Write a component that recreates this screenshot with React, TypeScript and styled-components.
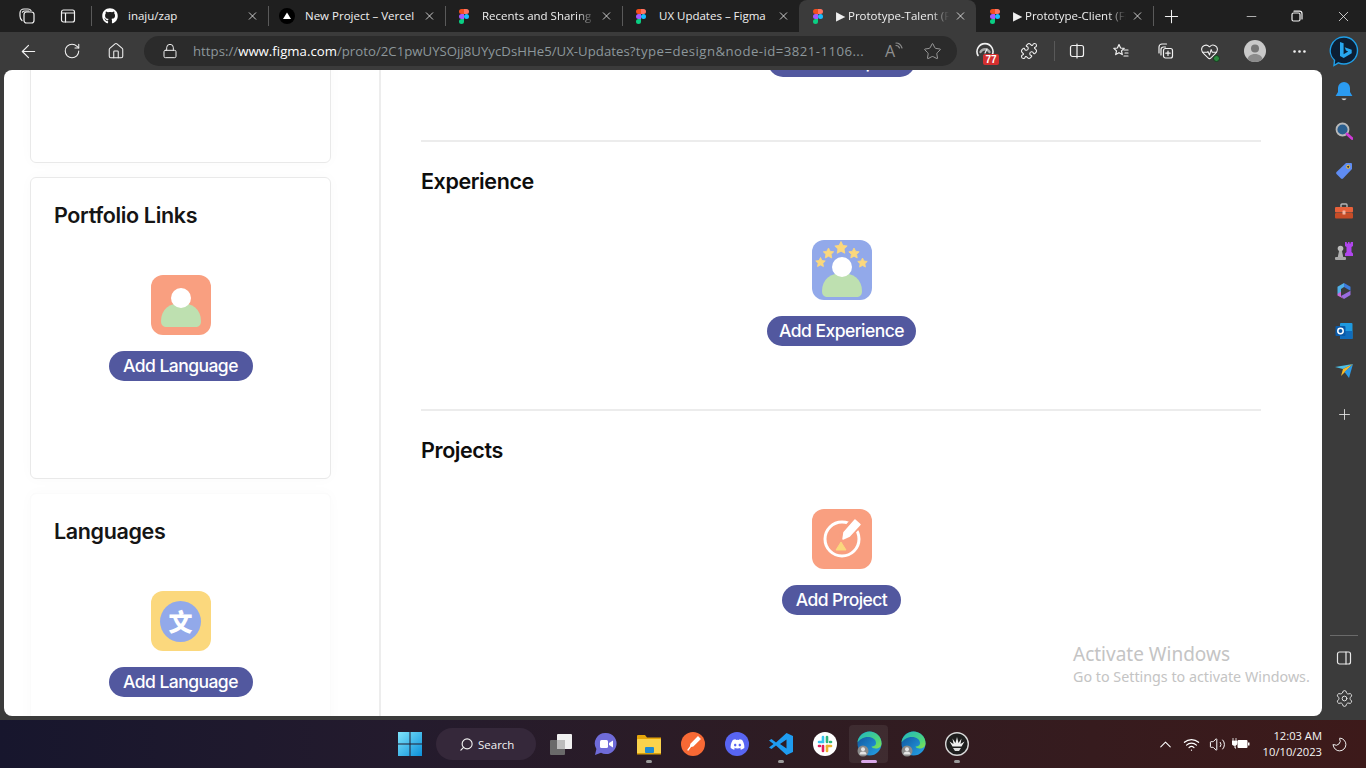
import React from "react";
import styled, { createGlobalStyle } from "styled-components";
import { FaGithub, FaDiscord } from "react-icons/fa";
import { ArrowLeft, RotateCw, Home, Lock, Star as StarLine, Puzzle, HeartPulse, MoreHorizontal, Plus, X, Minus, Search, ChevronUp, Wifi, Volume2, Moon, Settings } from "lucide-react";

const Global = createGlobalStyle`
  html, body { margin: 0; padding: 0; width: 1366px; height: 768px; overflow: hidden; background: #3b3b3b; }
  * { box-sizing: border-box; }
  svg { display: block; }
`;
const UI = `"Open Sans", "Noto Sans", "Liberation Sans", sans-serif`;

const Page = styled.div`width:1366px;height:768px;display:flex;flex-direction:column;overflow:hidden;background:#3b3b3b;font-family:${UI};`;
const TabBar = styled.div`height:32px;background:#1f1f1f;display:flex;align-items:stretch;color:#f2f2f2;flex:none;`;
const TabLead = styled.div`width:91px;padding-left:7px;display:flex;flex:none;`;
const Slot = styled.div<{ $w?: number }>`width:${p => p.$w ?? 44}px;flex:none;display:flex;align-items:center;justify-content:center;position:relative;color:#f2f2f2;`;
const Sep = styled.div<{ $off?: boolean }>`width:1px;height:20px;align-self:center;flex:none;background:${p => (p.$off ? "transparent" : "#5a5a5a")};`;
const Tab = styled.div<{ $active?: boolean }>`
  width:${p => (p.$active ? 177 : 176)}px;margin-left:${p => (p.$active ? -1 : 0)}px;flex:none;display:flex;align-items:center;
  padding:0 9px 0 ${p => (p.$active ? 11 : 10)}px;
  background:${p => (p.$active ? "#3b3b3b" : "transparent")};border-radius:8px 8px 0 0;
`;
const TabIcon = styled.div`width:16px;height:16px;flex:none;display:flex;align-items:center;justify-content:center;`;
const TabTitle = styled.div<{ $fade?: boolean }>`
  margin-left:10px;width:113px;flex:none;font-size:11.5px;line-height:16px;white-space:nowrap;overflow:hidden;color:#f0f0f0;
  ${p => (p.$fade ? "-webkit-mask-image:linear-gradient(90deg,#000 84%,transparent 100%);mask-image:linear-gradient(90deg,#000 84%,transparent 100%);" : "")}
`;
const TabClose = styled.div`margin-left:auto;width:13px;display:flex;justify-content:center;color:#f0f0f0;`;
const WindowControls = styled.div`margin-left:auto;display:flex;`;

const Toolbar = styled.div`height:38px;background:#3b3b3b;display:flex;align-items:center;padding-left:6px;flex:none;`;
const Address = styled.div`margin:0 6px;width:813px;height:30px;flex:none;border-radius:15px;background:#2b2b2b;display:flex;align-items:center;padding-left:18px;color:#eeeeee;`;
const Url = styled.div`margin-left:15px;width:673px;font-size:13.2px;white-space:nowrap;overflow:hidden;color:#8d979b;letter-spacing:.02px;`;
const Host = styled.span`color:#fff;`;
const Query = styled.span`letter-spacing:.45px;`;
const ReadAloud = styled.div`margin-left:19px;display:flex;align-items:flex-start;color:#8f8f8f;font-size:16px;line-height:18px;width:20px;`;
const AddrStar = styled.div`margin-left:18px;color:#a8a8a8;`;
const ToolSep = styled.div`width:1px;height:20px;background:#595959;margin:0 0 0 3px;flex:none;`;
const Badge = styled.div`position:absolute;left:20px;top:13px;width:16px;height:11px;border-radius:2px;background:#d32f2f;color:#fff;font:700 10px/11px "Liberation Sans",sans-serif;text-align:center;`;
const OkDot = styled.div`position:absolute;left:26px;top:13px;width:7px;height:7px;border-radius:50%;background:#2a8a3e;border:1px solid #173c20;`;
const Avatar = styled.div`width:22px;height:22px;border-radius:50%;background:#c9c9c9;overflow:hidden;`;

const Main = styled.div`flex:1;min-height:0;display:flex;padding-left:4px;`;
const Content = styled.div`width:1318px;height:646px;background:#fff;border-radius:8px;overflow:hidden;display:flex;position:relative;flex:none;`;
const Side = styled.div`width:377px;flex:none;border-right:2px solid #ededed;padding-left:26px;overflow:hidden;`;
const SideScroll = styled.div`margin-top:-209px;display:flex;flex-direction:column;gap:14px;`;
const Card = styled.section<{ $plain?: boolean }>`
  width:301px;height:302px;flex:none;border-radius:6px;padding:24px 23px 0;background:#fff;
  border:1px solid ${p => (p.$plain ? "#fbfbfb" : "#e9e9e9")};box-shadow:0 0 14px rgba(0,0,0,.025);
`;
const Empty = styled.div`height:100%;`;
const CardTitle = styled.h2`margin:0 0 47px;font:600 21.5px/26px Inter,sans-serif;color:#151515;letter-spacing:-.35px;`;
const Add = styled.div`display:flex;flex-direction:column;align-items:center;gap:16px;`;
const BodyAdd = styled(Add)`margin-left:1px;`;
const Pill = styled.div<{ $w: number }>`width:${p => p.$w}px;height:30px;border-radius:15px;background:#52589f;color:#fff;text-align:center;font:500 17.5px/30px Inter,sans-serif;letter-spacing:-.55px;white-space:nowrap;`;
const LangTile = styled.div`width:60px;height:60px;border-radius:12px;background:#fbd87d;display:flex;align-items:center;justify-content:center;`;
const LangCircle = styled.div`width:41px;height:41px;border-radius:50%;background:#92a9ea;color:#fff;display:flex;align-items:center;justify-content:center;font:900 24px/1 "Noto Sans CJK SC",sans-serif;`;

const Body = styled.div`flex:1;padding:0 61px 0 40px;overflow:hidden;`;
const TopAdd = styled.div`margin-top:-23px;padding-bottom:63px;`;
const Sec = styled.section`border-top:2px solid #ececec;height:269px;padding-top:26px;`;
const SecTitle = styled.h2`margin:0 0 46px;font:600 21.5px/26px Inter,sans-serif;color:#0d0d0d;letter-spacing:-.4px;`;

const Watermark = styled.div`position:absolute;left:1069px;top:571px;color:#c4c4c4;font-family:"Noto Sans",sans-serif;`;
const WmTitle = styled.div`font-size:19px;line-height:26px;`;
const WmSub = styled.div`font-size:14.3px;line-height:20px;`;

const Rail = styled.aside`width:44px;flex:none;display:flex;flex-direction:column;align-items:center;padding:1px 0 2px;height:650px;`;
const RailSlot = styled.div<{ $gap?: number }>`width:44px;height:40px;flex:none;display:flex;align-items:center;justify-content:center;position:relative;color:#e8e8e8;margin-top:${p => p.$gap ?? 0}px;`;
const RailSep = styled.div`width:28px;height:1px;background:#6a6a6a;margin-top:auto;margin-bottom:2px;`;

const Taskbar = styled.footer`height:48px;flex:none;display:flex;align-items:center;padding-left:388px;padding-right:18px;background:linear-gradient(90deg,#17162d 0%,#241b2d 30%,#2f1c22 60%,#3d1a1a 100%);color:#fff;`;
const Searchbox = styled.div`margin:0 3px 0 4px;width:100px;height:32px;border-radius:16px;background:#35283a;display:flex;align-items:center;padding-left:23px;gap:4px;font-size:11.5px;color:#f2f2f2;flex:none;`;
const Mirror = styled.div`transform:scaleX(-1);`;
const TaskSlot = styled.div<{ $active?: boolean }>`
  width:44px;height:48px;flex:none;display:flex;align-items:center;justify-content:center;position:relative;
  ${p => (p.$active ? `&::before{content:"";position:absolute;left:2px;right:3px;top:5px;bottom:5px;border-radius:4px;background:rgba(255,255,255,.07);}` : "")}
  & > svg { position:relative; }
`;
const Dot = styled.div<{ $active?: boolean }>`position:absolute;bottom:5px;left:50%;transform:translateX(-50%);height:3px;border-radius:2px;width:${p => (p.$active ? 16 : 6)}px;background:${p => (p.$active ? "#d9a8e8" : "#9a9a9a")};`;
const DiscordTile = styled.div`width:24px;height:24px;border-radius:50%;background:#5865f2;display:flex;align-items:center;justify-content:center;color:#fff;`;
const Tray = styled.div`margin-left:auto;display:flex;align-items:center;`;
const Clock = styled.div`width:69px;text-align:right;font-size:11.2px;line-height:16px;color:#f5f5f5;white-space:nowrap;`;
const MoonSlot = styled.div`margin-left:8px;width:18px;display:flex;justify-content:center;color:#f0f0f0;`;

const Figma = () => (
  <svg width="10" height="15" viewBox="0 0 38 57">
    <path d="M19 28.5a9.5 9.5 0 1 1 19 0 9.5 9.5 0 0 1-19 0z" fill="#1ABCFE" />
    <path d="M0 47.5A9.5 9.5 0 0 1 9.5 38H19v9.5a9.5 9.5 0 1 1-19 0z" fill="#0ACF83" />
    <path d="M19 0v19h9.5a9.5 9.5 0 1 0 0-19H19z" fill="#FF7262" />
    <path d="M0 9.5A9.5 9.5 0 0 0 9.5 19H19V0H9.5A9.5 9.5 0 0 0 0 9.5z" fill="#F24E1E" />
    <path d="M0 28.5A9.5 9.5 0 0 0 9.5 38H19V19H9.5A9.5 9.5 0 0 0 0 28.5z" fill="#A259FF" />
  </svg>
);
const Vercel = () => (
  <svg width="16" height="16" viewBox="0 0 16 16"><circle cx="8" cy="8" r="8" fill="#000" /><path d="M8 4.5 12 11H4z" fill="#fff" /></svg>
);
const Line = ({ s = 16, v = 16, children }: { s?: number; v?: number; children: React.ReactNode }) => (
  <svg width={s} height={s} viewBox={`0 0 ${v} ${v}`} fill="none" stroke="currentColor" strokeWidth="1.2" strokeLinecap="round" strokeLinejoin="round">{children}</svg>
);
const Workspaces = () => (
  <Line s={18} v={18}><rect x="6" y="5" width="10" height="11" rx="2.5" /><path d="M4 13.5C2.8 12.5 2 11 2 9V6a4 4 0 0 1 4-4h4c1.3 0 2.4.5 3 1.5" /><path d="M4.4 5.2A3 3 0 0 1 7 4h4" /></Line>
);
const VTabs = () => (
  <Line s={16}><rect x="1.5" y="2" width="13" height="12" rx="2" /><path d="M1.5 5h13M5.5 5v9" /></Line>
);
const Split = () => (
  <Line s={16}><rect x="1.5" y="2.5" width="13" height="11" rx="2" /><path d="M8 1v14" /></Line>
);
const Favs = () => (
  <Line s={18} v={18}><path d="M7 2.5 8.6 6l3.6.4-2.7 2.5.8 3.7L7 10.7l-3.3 1.9.8-3.7-2.7-2.5L5.4 6z" /><path d="M12 8h4M13 11h3M12 14h4" /></Line>
);
const Collections = () => (
  <Line s={18} v={18}><path d="M3 11V5a3 3 0 0 1 3-3h4.5" /><path d="M5 13V7.5A2.5 2.5 0 0 1 7.5 5h2" /><rect x="7.5" y="6.5" width="9" height="9.5" rx="2" /><path d="M12 9v4.5M9.8 11.2h4.4" /></Line>
);
const Bing = () => (
  <svg width="30" height="32" viewBox="0 0 30 32">
    <path d="M15 2a13.5 13.5 0 0 1 0 27c-2 0-4-.4-5.6-1.2L5 30.5l.5-5.2A13.5 13.5 0 0 1 15 2z" fill="#0c1e33" stroke="#1f9fe8" strokeWidth="1.4" />
    <path d="M11 7l3.6 1.3v11l4.6-2.7-2.2-1-1.3-3.4 7 2.5v3.6l-8 4.7-3.7-2z" fill="#27a7f0" />
  </svg>
);
const Gauge = () => (
  <Line s={20} v={20}><path d="M3 14.5a8 8 0 1 1 14 0" strokeWidth="1.6" /><path d="M5.5 11a5 5 0 0 1 9 0" stroke="#aaa" strokeWidth="2.4" /><path d="M10 12l2-4" /></Line>
);
const Bell = () => (
  <svg width="18" height="20" viewBox="0 0 18 20"><path d="M9 1a6 6 0 0 1 6 6v4l2.4 4H.6L3 11V7a6 6 0 0 1 6-6z" fill="#2b9bf0" /><path d="M6.5 17.5h5c-.6 1.2-1.5 1.7-2.5 1.7s-1.9-.5-2.5-1.7z" fill="#cfcfcf" /></svg>
);
const SearchColor = () => (
  <svg width="18" height="18" viewBox="0 0 18 18"><circle cx="7.5" cy="7.5" r="6" fill="#2b5f8f" stroke="#b9b9b9" strokeWidth="1.8" /><path d="M12 12l5 4.5" stroke="#cf3ad6" strokeWidth="2.8" strokeLinecap="round" /></svg>
);
const TagIcon = () => (
  <svg width="18" height="18" viewBox="0 0 18 18"><path d="M11 1h5a1 1 0 0 1 1 1v5L8 16.5a1.5 1.5 0 0 1-2 0L1.5 12a1.5 1.5 0 0 1 0-2z" fill="#5f8cf2" /><circle cx="13.2" cy="4.8" r="1.6" fill="#3b3b3b" stroke="#f3c33f" strokeWidth="1" /></svg>
);
const Toolbox = () => (
  <svg width="18" height="16" viewBox="0 0 18 16"><path d="M6 4V2a1 1 0 0 1 1-1h4a1 1 0 0 1 1 1v2" fill="none" stroke="#b5b5b5" strokeWidth="1.4" /><rect y="4" width="18" height="5.5" rx="1" fill="#e8613a" /><rect y="10" width="18" height="5.5" rx="1" fill="#c74c27" /><rect x="7.5" y="7.5" width="3" height="4" rx=".6" fill="#f2b3a0" /></svg>
);
const Chess = () => (
  <svg width="20" height="20" viewBox="0 0 20 20">
    <circle cx="6.5" cy="7.5" r="2.8" fill="#bdbdbd" /><path d="M5 10h3l1.2 6H3.8z" fill="#b0b0b0" /><rect x="1" y="16" width="11" height="3" rx="1" fill="#a8a8a8" />
    <path d="M11 1h1.8v1.500H14V1h1.500v1.500h1.200V1H19v4l-1.500 1v5l1.500 1.500V15h-8v-2.500L12.500 11V6L11 5z" fill="#b145ee" />
  </svg>
);
const Copilot = () => (
  <svg width="18" height="18" viewBox="0 0 18 18"><path d="M9 1l6.5 3.7v4L9 5z" fill="#3d7bdc" /><path d="M2.5 4.7 9 1v4L6 7v7l-3.5-2z" fill="#4fb0e8" /><path d="M6 14l9.5-5.3V13L9 17z" fill="#9a6de0" /><path d="M2.5 12 6 9.5V14l3 3-6.5-3.5z" fill="#c86ad8" /></svg>
);
const Outlook = () => (
  <svg width="18" height="18" viewBox="0 0 18 18"><rect x="5" y="1" width="12.5" height="16" rx="1" fill="#1e9ae0" /><path d="M5 9h12.5v8H6a1 1 0 0 1-1-1z" fill="#0f6cbd" /><rect x=".5" y="4" width="10" height="10" rx="1" fill="#0a5aa8" /><circle cx="5.5" cy="9" r="2.7" fill="none" stroke="#fff" strokeWidth="1.5" /></svg>
);
const Send = () => (
  <svg width="18" height="14" viewBox="0 0 18 14"><path d="M0 3 18 0 8 5z" fill="#4cc0e8" /><path d="M8 5 18 0 6 12z" fill="#f7b928" /><path d="M18 0 14 14 9.5 8z" fill="#2b9be8" /></svg>
);
const PanelIcon = () => (
  <Line s={16}><rect x="1.5" y="2" width="13" height="12" rx="2" /><path d="M10 2v12" /></Line>
);
const WinLogo = () => (
  <svg width="24" height="24" viewBox="0 0 24 24">
    <defs><linearGradient id="w" x1="0" y1="0" x2="1" y2="1"><stop offset="0" stopColor="#7fe4fb" /><stop offset="1" stopColor="#0b8fd9" /></linearGradient></defs>
    <path d="M0 0h11.5v11.5H0zM12.5 0H24v11.5H12.5zM0 12.5h11.5V24H0zM12.5 12.5H24V24H12.5z" fill="url(#w)" />
  </svg>
);
const TaskView = () => (
  <svg width="24" height="24" viewBox="0 0 24 24"><rect x="1" y="8" width="15" height="15" rx="1" fill="#6a6a6a" /><rect x="8" y="2" width="15" height="15" rx="1" fill="#f0f0f0" /><rect x="8" y="8" width="8" height="9" fill="#bcbcbc" /></svg>
);
const Meet = () => (
  <svg width="24" height="24" viewBox="0 0 24 24"><path d="M13 1a10.5 10.5 0 1 1-5 19.7L2 23l1.4-6A10.5 10.5 0 0 1 13 1z" fill="#6f6bd8" /><rect x="7" y="8" width="8" height="8" rx="1.5" fill="#fff" /><path d="M16 11l4-2.5v7L16 13z" fill="#fff" /></svg>
);
const Explorer = () => (
  <svg width="24" height="24" viewBox="0 0 24 24"><path d="M0 4a1 1 0 0 1 1-1h7l2 2.5h14V8H0z" fill="#e5a50a" /><rect y="7" width="24" height="15" rx="1" fill="#fbd34c" /><rect x="8" y="15" width="9" height="6" rx="1" fill="#1f8ad2" /><rect y="21" width="24" height="1.5" fill="#d9a00a" /></svg>
);
const Postman = () => (
  <svg width="24" height="24" viewBox="0 0 24 24"><circle cx="12" cy="12" r="12" fill="#f76935" /><path d="M17 5l2 2-7 7-2.5.5.5-2.5zM10 14l-3 4" stroke="#fff" strokeWidth="1.3" fill="#fff" strokeLinecap="round" /></svg>
);
const VSCode = () => (
  <svg width="24" height="24" viewBox="0 0 24 24"><path d="M17.5 1 24 4v16l-6.5 3L7 13.5 2.5 17 0 15.5 4.5 12 0 8.5 2.5 7 7 10.5zM17.5 7.5 11 12l6.5 4.5z" fill="#1f9cf0" /></svg>
);
const Slack = () => (
  <svg width="24" height="24" viewBox="0 0 24 24"><circle cx="12" cy="12" r="12" fill="#fff" />
    <g strokeWidth="2.6" strokeLinecap="round" fill="none"><path d="M10 5v5H6" stroke="#36c5f0" /><path d="M14 5v5" stroke="#2eb67d" /><path d="M18 10h-1" stroke="#2eb67d" /><path d="M14 19v-5" stroke="#ecb22e" /><path d="M18 14h-4" stroke="#ecb22e" /><path d="M10 14v5" stroke="#e01e5a" /><path d="M6 14h1" stroke="#e01e5a" /></g>
  </svg>
);
const Edge = () => (
  <svg width="25" height="26" viewBox="0 0 25 26">
    <defs>
      <linearGradient id="eg" x1="0" y1="0" x2="1" y2="1"><stop offset="0" stopColor="#1fb5c4" /><stop offset=".7" stopColor="#4fd67a" /><stop offset="1" stopColor="#8ee04a" /></linearGradient>
      <linearGradient id="eb" x1="0" y1="0" x2="1" y2="1"><stop offset="0" stopColor="#0f4f98" /><stop offset="1" stopColor="#26a6ea" /></linearGradient>
    </defs>
    <circle cx="12.5" cy="12.5" r="12" fill="url(#eb)" />
    <path d="M12.5.5a12 12 0 0 1 12 12c0 3-2.5 5-6 5-2 0-3.8-.8-4-2 3 0 4.5-1.5 4.5-3.500 0-3.500-3.500-6-8-6-5 0-8.500 2.500-10.500 5.500C1 5.500 6 .5 12.500.5z" fill="url(#eg)" />
    <circle cx="6" cy="20" r="5.5" fill="#8a8a8a" /><circle cx="6" cy="18.3" r="2" fill="#e4e4e4" /><path d="M2.5 23.5a3.5 3 0 0 1 7 0z" fill="#e4e4e4" />
  </svg>
);
const Peacock = () => (
  <svg width="24" height="24" viewBox="0 0 24 24"><circle cx="12" cy="12" r="11.3" fill="#1e1e1e" stroke="#d8d8d8" strokeWidth="1.4" /><path d="M12 5l1.5 6 3-4.5-1 5.5 4-2.5-3 5H7.5l-3-5 4 2.5-1-5.5 3 4.500z" fill="#f0f0f0" /><path d="M8 16h8l-2 3h-4z" fill="#e0e0e0" /></svg>
);
const Battery = () => (
  <svg width="18" height="14" viewBox="0 0 18 14"><path d="M1 1v3M4 1v3M0 4h5v2a2.5 2.5 0 0 1-5 0z" fill="#fff" stroke="#fff" strokeWidth=".8" /><path d="M3 8v3h1" stroke="#fff" fill="none" /><rect x="5.5" y="3" width="10" height="8" rx="1" fill="#fff" /><rect x="16" y="5.5" width="1.5" height="3" fill="#fff" /></svg>
);

const Tile = ({ fill, children }: { fill: string; children: React.ReactNode }) => (
  <svg width="60" height="60" viewBox="0 0 60 60"><rect width="60" height="60" rx="12" fill={fill} />{children}</svg>
);
const Body1 = ({ top }: { top: number }) => (
  <path d={`M10 ${top + 18}C10 ${top + 6} 19 ${top} 30 ${top}C41 ${top} 50 ${top + 6} 50 ${top + 18}C50 ${top + 22} 48 ${top + 24} 44 ${top + 24}H16C12 ${top + 24} 10 ${top + 22} 10 ${top + 18}Z`} fill="#bee0b0" />
);
const StarShape = ({ x, y, r = 5.5 }: { x: number; y: number; r?: number }) => {
  const pts = Array.from({ length: 10 }, (_, i) => {
    const a = -Math.PI / 2 + (i * Math.PI) / 5;
    const d = i % 2 ? r * 0.5 : r;
    return `${(x + d * Math.cos(a)).toFixed(2)},${(y + d * Math.sin(a)).toFixed(2)}`;
  }).join(" ");
  return <polygon points={pts} fill="#fbd87d" stroke="#fbd87d" strokeWidth=".8" strokeLinejoin="round" />;
};
const PersonTile = () => (
  <Tile fill="#f99f80"><Body1 top={28} /><circle cx="30" cy="23" r="10" fill="#fff" /></Tile>
);
const ExperienceTile = () => (
  <Tile fill="#92a9ea">
    <StarShape x={29} y={8} r={6.5} /><StarShape x={16.5} y={13.5} /><StarShape x={42} y={13.5} /><StarShape x={8.5} y={22.5} r={5} /><StarShape x={50.5} y={23} r={5} />
    <Body1 top={33} /><circle cx="30" cy="27" r="10" fill="#fff" />
  </Tile>
);
const ProjectTile = () => (
  <Tile fill="#f99f80">
    <circle cx="30" cy="30" r="17" fill="none" stroke="#fff" strokeWidth="3" />
    <path d="M34 25 44 14" stroke="#f99f80" strokeWidth="13" strokeLinecap="round" />
    <path d="M43 11 48 15.5 37.5 27 31 30 32 23.5z" fill="#fff" stroke="#fff" strokeWidth="1.5" strokeLinejoin="round" />
    <path d="M29 33l5 8h-10z" fill="#fbd87d" stroke="#fbd87d" strokeWidth="1" strokeLinejoin="round" />
  </Tile>
);

const tabs = [
  { icon: <FaGithub size={16} color="#fff" />, title: "inaju/zap" },
  { icon: <Vercel />, title: "New Project – Vercel" },
  { icon: <Figma />, title: "Recents and Sharing", fade: true },
  { icon: <Figma />, title: "UX Updates – Figma", off: true },
  { icon: <Figma />, title: "▶ Prototype-Talent (Figma)", fade: true, active: true, off: true },
  { icon: <Figma />, title: "▶ Prototype-Client (Figma)", fade: true },
];

export default function App() {
  return (
    <>
      <Global />
      <Page>
        <TabBar>
          <TabLead>
            <Slot $w={40}><Workspaces /></Slot>
            <Slot $w={41}><VTabs /></Slot>
          </TabLead>
          <Sep />
          {tabs.map((t, i) => (
            <React.Fragment key={i}>
              <Tab $active={t.active}>
                <TabIcon>{t.icon}</TabIcon>
                <TabTitle $fade={t.fade}>{t.title}</TabTitle>
                <TabClose><X size={14} strokeWidth={1.5} /></TabClose>
              </Tab>
              <Sep $off={t.off} />
            </React.Fragment>
          ))}
          <Slot $w={34}><Plus size={21} strokeWidth={1.2} /></Slot>
          <WindowControls>
            <Slot $w={46}><Minus size={15} strokeWidth={1.1} /></Slot>
            <Slot $w={46}><Line s={12} v={12}><rect x="1" y="3" width="8" height="8" rx="1.5" /><path d="M3 1.2h5.5A2.5 2.5 0 0 1 11 3.7V9" /></Line></Slot>
            <Slot $w={46}><X size={17} strokeWidth={1.1} /></Slot>
          </WindowControls>
        </TabBar>
        <Toolbar>
          <Slot><ArrowLeft size={21} strokeWidth={1.3} /></Slot>
          <Slot><RotateCw size={18} strokeWidth={1.4} /></Slot>
          <Slot><Home size={18} strokeWidth={1.4} /></Slot>
          <Address>
            <Lock size={16} strokeWidth={1.5} />
            <Url>https://<Host>www.figma.com</Host>/proto/2C1pwUYSOjj8UYycDsHHe5/UX-Updates<Query>?type=design&amp;node-id=3821-1106...</Query></Url>
            <ReadAloud>A<Line s={8} v={8}><path d="M1 1c3 0 5 2 6 5M1 3.5c1.5 0 3 1 3.5 2.5" /></Line></ReadAloud>
            <AddrStar><StarLine size={19} strokeWidth={1.1} /></AddrStar>
          </Address>
          <Slot><Gauge /><Badge>77</Badge></Slot>
          <Slot><Puzzle size={18} strokeWidth={1.4} /></Slot>
          <ToolSep />
          <Slot><Split /></Slot>
          <Slot><Favs /></Slot>
          <Slot><Collections /></Slot>
          <Slot $w={45}><HeartPulse size={19} strokeWidth={1.3} /><OkDot /></Slot>
          <Slot $w={45}><Avatar><svg width="22" height="22" viewBox="0 0 22 22"><circle cx="11" cy="8.5" r="4" fill="#777" /><path d="M3 22c0-6 4-8 8-8s8 2 8 8z" fill="#8b8b8b" /></svg></Avatar></Slot>
          <Slot $w={45}><MoreHorizontal size={17} strokeWidth={1.8} /></Slot>
          <Slot $w={44}><Bing /></Slot>
        </Toolbar>
        <Main>
          <Content>
            <Side>
              <SideScroll>
                <Card><Empty /></Card>
                <Card>
                  <CardTitle>Portfolio Links</CardTitle>
                  <Add><PersonTile /><Pill $w={144}>Add Language</Pill></Add>
                </Card>
                <Card $plain>
                  <CardTitle>Languages</CardTitle>
                  <Add><LangTile><LangCircle>文</LangCircle></LangTile><Pill $w={144}>Add Language</Pill></Add>
                </Card>
              </SideScroll>
            </Side>
            <Body>
              <TopAdd><BodyAdd><Pill $w={147}>Add Workspace</Pill></BodyAdd></TopAdd>
              <Sec>
                <SecTitle>Experience</SecTitle>
                <BodyAdd><ExperienceTile /><Pill $w={149}>Add Experience</Pill></BodyAdd>
              </Sec>
              <Sec>
                <SecTitle>Projects</SecTitle>
                <BodyAdd><ProjectTile /><Pill $w={119}>Add Project</Pill></BodyAdd>
              </Sec>
            </Body>
            <Watermark>
              <WmTitle>Activate Windows</WmTitle>
              <WmSub>Go to Settings to activate Windows.</WmSub>
            </Watermark>
          </Content>
          <Rail>
            <RailSlot><Bell /></RailSlot>
            <RailSlot><SearchColor /></RailSlot>
            <RailSlot><TagIcon /></RailSlot>
            <RailSlot><Toolbox /></RailSlot>
            <RailSlot><Chess /></RailSlot>
            <RailSlot><Copilot /></RailSlot>
            <RailSlot><Outlook /></RailSlot>
            <RailSlot><Send /></RailSlot>
            <RailSlot $gap={3}><Plus size={17} strokeWidth={1.2} /></RailSlot>
            <RailSep />
            <RailSlot><PanelIcon /></RailSlot>
            <RailSlot><Settings size={19} strokeWidth={1.2} /></RailSlot>
          </Rail>
        </Main>
        <Taskbar>
          <TaskSlot><WinLogo /></TaskSlot>
          <Searchbox><Mirror><Search size={15} strokeWidth={1.8} /></Mirror><span>Search</span></Searchbox>
          <TaskSlot><TaskView /></TaskSlot>
          <TaskSlot><Meet /></TaskSlot>
          <TaskSlot><Explorer /><Dot /></TaskSlot>
          <TaskSlot><Postman /></TaskSlot>
          <TaskSlot><DiscordTile><FaDiscord size={15} /></DiscordTile></TaskSlot>
          <TaskSlot><VSCode /><Dot /></TaskSlot>
          <TaskSlot><Slack /></TaskSlot>
          <TaskSlot $active><Edge /><Dot $active /></TaskSlot>
          <TaskSlot><Edge /></TaskSlot>
          <TaskSlot><Peacock /><Dot /></TaskSlot>
          <Tray>
            <Slot $w={26}><ChevronUp size={19} strokeWidth={1.3} color="#fff" /></Slot>
            <Slot $w={27}><Wifi size={17} strokeWidth={1.7} color="#fff" /></Slot>
            <Slot $w={24}><Volume2 size={17} strokeWidth={1.4} color="#fff" /></Slot>
            <Slot $w={24}><Battery /></Slot>
            <Clock>12:03 AM<br />10/10/2023</Clock>
            <MoonSlot><Mirror><Moon size={17} strokeWidth={1.4} /></Mirror></MoonSlot>
          </Tray>
        </Taskbar>
      </Page>
    </>
  );
}
